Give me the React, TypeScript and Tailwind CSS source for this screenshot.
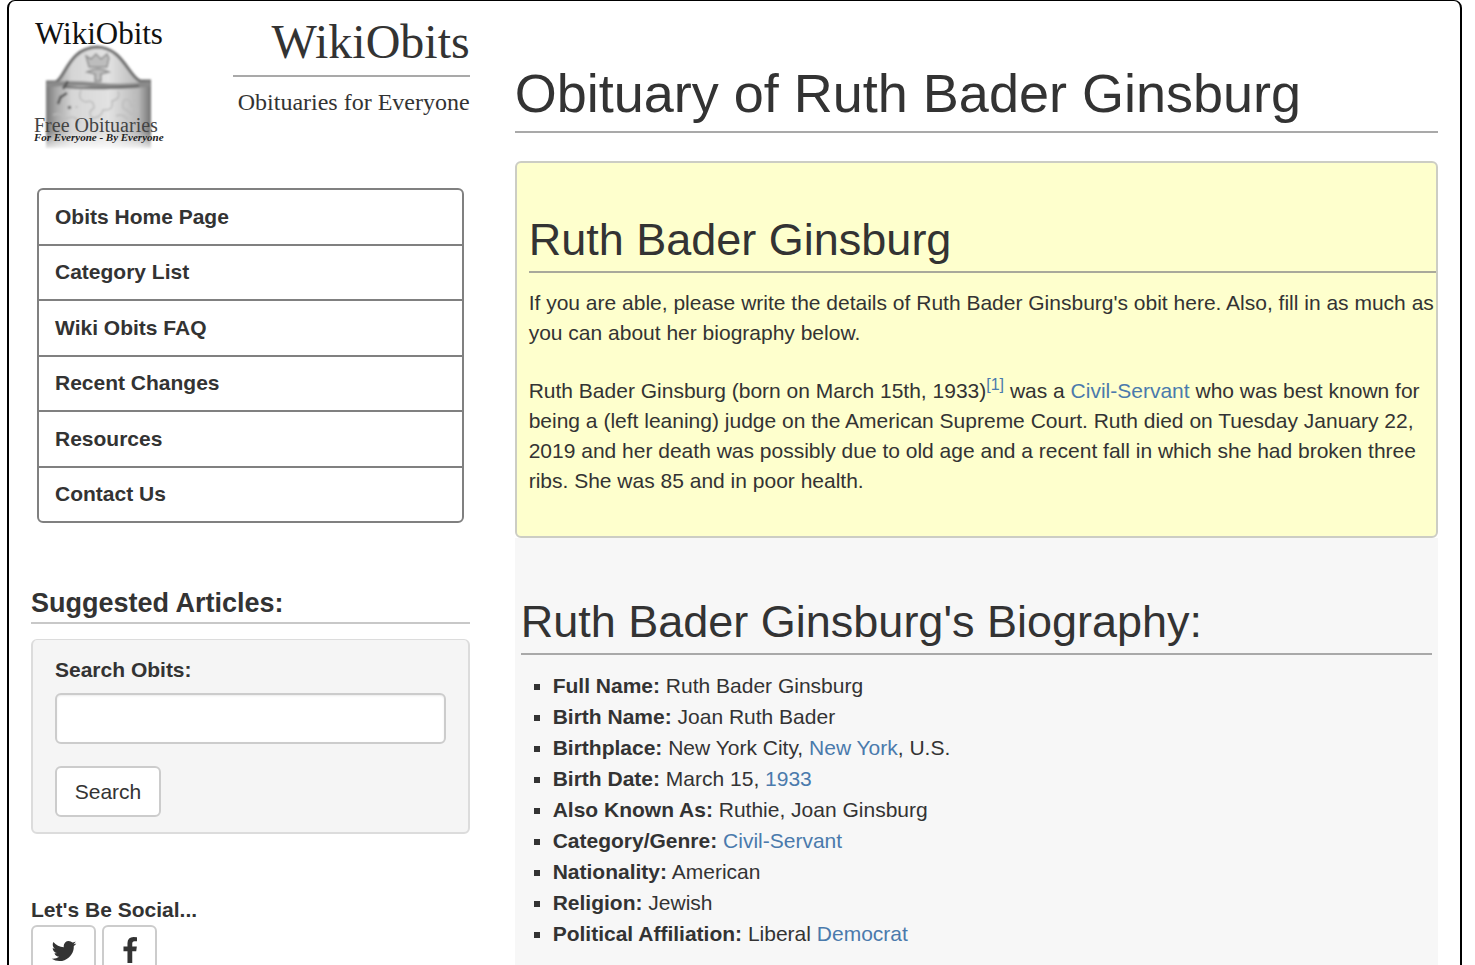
import React from "react";

const menuItems = [
  "Obits Home Page",
  "Category List",
  "Wiki Obits FAQ",
  "Recent Changes",
  "Resources",
  "Contact Us",
];

const Link = ({ children }: { children: React.ReactNode }) => (
  <a href="#" className="text-[#4a7aac] hover:underline">
    {children}
  </a>
);

const facts: { label: string; value: React.ReactNode }[] = [
  { label: "Full Name", value: "Ruth Bader Ginsburg" },
  { label: "Birth Name", value: "Joan Ruth Bader" },
  { label: "Birthplace", value: <>New York City, <Link>New York</Link>, U.S.</> },
  { label: "Birth Date", value: <>March 15, <Link>1933</Link></> },
  { label: "Also Known As", value: "Ruthie, Joan Ginsburg" },
  { label: "Category/Genre", value: <Link>Civil-Servant</Link> },
  { label: "Nationality", value: "American" },
  { label: "Religion", value: "Jewish" },
  { label: "Political Affiliation", value: <>Liberal <Link>Democrat</Link></> },
];

const TwitterIcon = () => (
  <svg width="28" height="28" viewBox="0 0 1792 1792" fill="currentColor" aria-hidden="true">
    <path d="M1684 408q-67 98-162 167 1 14 1 42 0 130-38 259.5t-115.5 248.5-184.5 210.5-258 146-323 54.5q-271 0-496-145 35 4 78 4 225 0 401-138-105-2-188-64.5t-114-159.5q33 5 61 5 43 0 85-11-112-23-185.5-111.5t-73.5-205.5v-4q68 38 146 41-66-44-105-115t-39-154q0-88 44-163 121 149 294.5 238.5t371.5 99.5q-8-38-8-74 0-134 94.500-228.500t228.500-94.500q140 0 236 102 109-21 205-78-37 115-142 178 93-10 186-50z" />
  </svg>
);

const FacebookIcon = () => (
  <svg width="28" height="28" viewBox="0 0 1792 1792" fill="currentColor" aria-hidden="true">
    <path d="M1343 12v264h-157q-86 0-116 36t-30 108v189h293l-39 296h-254v759h-306v-759h-255v-296h255v-218q0-186 104-288.500t277-102.500q147 0 228 12z" />
  </svg>
);

const Logo = () => (
  <svg
    width="134"
    height="136"
    viewBox="0 -8 134 136"
    className="shrink-0"
    fontFamily="'Liberation Serif', serif"
    role="img"
    aria-label="WikiObits"
  >
    <defs>
      <linearGradient id="stone" x1="0" x2="1" y1="0" y2="0">
        <stop offset="0" stopColor="#777" />
        <stop offset="0.1" stopColor="#a8a8a8" />
        <stop offset="0.25" stopColor="#d6d6d6" />
        <stop offset="0.6" stopColor="#e2e2e2" />
        <stop offset="0.88" stopColor="#b8b8b8" />
        <stop offset="1" stopColor="#747474" />
      </linearGradient>
      <linearGradient id="fade" x1="0" x2="0" y1="0" y2="1">
        <stop offset="0" stopColor="#fff" stopOpacity="0" />
        <stop offset="1" stopColor="#fff" stopOpacity="0.9" />
      </linearGradient>
      <filter id="soft" x="-10%" y="-10%" width="120%" height="120%">
        <feGaussianBlur stdDeviation="0.8" />
      </filter>
    </defs>
    <g filter="url(#soft)">
      <path
        d="M15 126V59H24C32 56 36 25 66 24C92 25 99 52 109 58L120 59V126Z"
        fill="url(#stone)"
      />
      <path
        d="M15 60H25C35 55 38 26 66 25C92 26 97 54 109 59H120"
        fill="none"
        stroke="#707070"
        strokeWidth="3"
      />
      <path d="M16 63Q40 60 66 63T119 62" fill="none" stroke="#8a8a8a" strokeWidth="5" />
      <path d="M33 65Q66 68 108 64" fill="none" stroke="#666" strokeWidth="2" />
      <path
        d="M55 34L60 37L65 32L70 37L76 32L78 36L76 45H58ZM56 50Q67 44 78 50L70 52V59H64V52Z"
        fill="#bdbdbd"
        stroke="#8f8f8f"
        strokeWidth="1.5"
      />
      <path
        d="M37 59L32 67M30 74L27 82M30 75L36 71M37 86L40 85"
        fill="none"
        stroke="#555"
        strokeWidth="2.5"
      />
      <path
        d="M44 85H47M50 68Q46 78 55 80Q63 77 63 86Q56 90 61 96Q70 96 72 88Q83 89 81 79Q90 77 87 69M93 78Q100 76 100 84Q108 84 107 91Q99 94 96 88Q89 87 93 78M22 93Q30 90 34 97Q45 92 48 101M85 94Q92 91 97 98"
        fill="none"
        stroke="#bcbcbc"
        strokeWidth="1.5"
      />
      <rect x="10" y="110" width="114" height="18" fill="url(#fade)" />
    </g>
    <text x="4" y="22" fontSize="31" fill="#111">WikiObits</text>
    <text x="3" y="110" fontSize="20" fill="#444">Free Obituaries</text>
    <text x="3" y="119" fontSize="11" fontStyle="italic" fontWeight="bold" fill="#222">
      For Everyone - By Everyone
    </text>
  </svg>
);

const Sidebar = () => (
  <aside className="pl-[22px] pr-[23px]">
    <header className="flex justify-between">
      <div className="pt-[13px]">
        <Logo />
      </div>
      <div className="w-[237px] pt-[15px] text-right font-['Liberation_Serif',serif]">
        <div className="pb-[7px] border-b-2 border-[#a9a9a9] text-5xl leading-[52px]">
          WikiObits
        </div>
        <p className="mt-2.5 text-2xl leading-[30px] whitespace-nowrap">Obituaries for Everyone</p>
      </div>
    </header>

    <nav className="mt-[38px] mx-1.5">
      <ul className="grid grid-rows-6 gap-0.5 h-[335px] border-2 border-[#808080] rounded-md bg-[#808080] overflow-hidden font-bold">
        {menuItems.map((item) => (
          <li key={item} className="flex items-center px-4 bg-white">
            <a href="#">{item}</a>
          </li>
        ))}
      </ul>
    </nav>

    <h4 className="mt-[65px] pb-1 border-b-2 border-[#c8c8c8] text-[27px] leading-[30px] font-bold">
      Suggested Articles:
    </h4>
    <form className="mt-[15px] px-[22px] py-[15px] border-2 border-t border-[#dcdcdc] rounded-md bg-[#f5f5f5]">
      <label htmlFor="search" className="block font-bold">
        Search Obits:
      </label>
      <input
        id="search"
        type="text"
        className="block mt-2 w-full h-[51px] px-4 border-2 border-[#ccc] rounded-md bg-white shadow-[inset_0_1px_2px_rgba(0,0,0,0.08)]"
      />
      <button
        type="button"
        className="block mt-[22px] h-[51px] w-[106px] border-2 border-[#ccc] rounded-md bg-white"
      >
        Search
      </button>
    </form>

    <h5 className="mt-[61px] font-bold">Let's Be Social...</h5>
    <div className="flex gap-1.5">
      <button
        type="button"
        aria-label="Twitter"
        className="flex justify-center items-center w-[65px] h-[51px] border-2 border-[#ccc] rounded-md bg-white"
      >
        <TwitterIcon />
      </button>
      <button
        type="button"
        aria-label="Facebook"
        className="flex justify-center items-center w-[55px] h-[51px] border-2 border-[#ccc] rounded-md bg-white"
      >
        <FacebookIcon />
      </button>
    </div>
  </aside>
);

const Article = () => (
  <main className="col-span-2 flex flex-col px-[22px] pt-[62px]">
    <h1 className="pb-2 border-b-2 border-[#a9a9a9] text-[54px] leading-[60px]">
      Obituary of Ruth Bader Ginsburg
    </h1>

    <section className="mt-7 pt-[52px] pb-10 pl-3 border-2 border-[#cccdc4] rounded-md bg-[#feffcd]">
      <h2 className="pb-1.5 border-b-2 border-[#a9a99b] text-[45px] leading-[50px]">
        Ruth Bader Ginsburg
      </h2>
      <p className="mt-[15px]">
        If you are able, please write the details of Ruth Bader Ginsburg's obit here. Also, fill in
        as much as you can about her biography below.
      </p>
      <p className="mt-7">
        Ruth Bader Ginsburg (born on March 15th, 1933)
        <sup className="text-base leading-none">
          <Link>[1]</Link>
        </sup>{" "}
        was a <Link>Civil-Servant</Link> who was best known for being a (left leaning) judge on the
        American Supreme Court. Ruth died on Tuesday January 22, 2019 and her death was possibly due
        to old age and a recent fall in which she had broken three ribs. She was 85 and in poor
        health.
      </p>
    </section>

    <section className="grow pt-[59px] px-1.5 bg-[#f7f7f7]">
      <h2 className="pb-1.5 border-b-2 border-[#a9a9a9] text-[45px] leading-[50px]">
        Ruth Bader Ginsburg's Biography:
      </h2>
      <ul className="mt-[15px] pl-8 list-[square] leading-[31px]">
        {facts.map(({ label, value }) => (
          <li key={label}>
            <b>{label}:</b> {value}
          </li>
        ))}
      </ul>
    </section>
  </main>
);

export default function App() {
  return (
    <div className="h-screen overflow-hidden bg-white pl-[7px] pr-[13px] font-['Liberation_Sans',Arial,sans-serif] text-[21px] leading-[30px] text-[#333]">
      <div className="grid grid-cols-3 min-h-[110vh] border-2 border-t border-black rounded-lg">
        <Sidebar />
        <Article />
      </div>
    </div>
  );
}
